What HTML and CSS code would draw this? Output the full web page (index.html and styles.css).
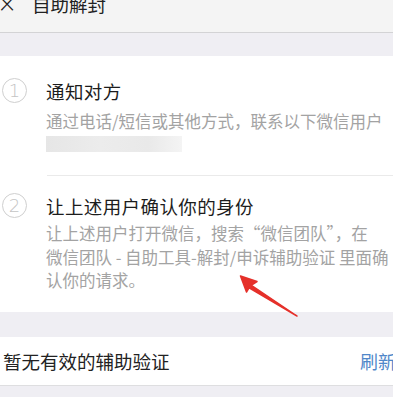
FILE: index.html
```html
<!DOCTYPE html>
<html lang="zh-CN">
<head>
<meta charset="utf-8">
<link rel="stylesheet" href="styles.css">
</head>
<body>
<div class="page">
  <header class="topbar">
    <span class="close">×</span>
    <span class="title">自助解封</span>
  </header>
  <div class="gap-top"></div>
  <section class="card">
    <div class="step">
      <div class="num">1</div>
      <div class="body">
        <div class="step-title">通知对方</div>
        <div class="step-desc">通过电话/短信或其他方式，联系以下微信用户</div>
        <div class="blur"></div>
      </div>
    </div>
    <div class="divider"></div>
    <div class="step step2">
      <div class="num">2</div>
      <div class="body">
        <div class="step-title">让上述用户确认你的身份</div>
        <div class="step-desc multi">让上述用户打开微信，搜索“微信团队”，在<br>微信团队 - 自助工具-解封/申诉辅助验证 里面确认你的请求。</div>
      </div>
    </div>
  </section>
  <div class="gap-mid"></div>
  <section class="row">
    <span class="row-text">暂无有效的辅助验证</span>
    <span class="refresh">刷新</span>
  </section>
  <div class="gap-bottom"></div>
  <svg class="arrow" width="393" height="397" viewBox="0 0 393 397">
    <path d="M297 316 L251 285 L249.5 288 Z M240.5 276 L257 281.5 L250 286 L246.5 292 Z" fill="#e5302a" stroke="#e5302a" stroke-width="1.5" stroke-linejoin="round"/>
  </svg>
</div>
</body>
</html>
```
FILE: styles.css
```css
html, body {
  margin: 0;
  padding: 0;
}
body {
  width: 393px;
  height: 397px;
  overflow: hidden;
  background: #efeef3;
  font-family: "Noto Sans CJK SC", "Noto Sans", sans-serif;
}
.page {
  position: relative;
  width: 393px;
}
.topbar {
  background: #f4f4f4;
  border-bottom: 1px solid #d3d3d5;
  display: flex;
  align-items: flex-start;
  overflow: hidden;
  box-sizing: border-box;
  height: 33px;
}
.close {
  font-size: 24px;
  line-height: 24px;
  margin-top: -8px;
  margin-left: -3px;
  color: #222;
  font-family: "DejaVu Sans", sans-serif;
  font-weight: 300;
}
.title {
  font-size: 18.5px;
  line-height: 22px;
  margin-top: -7px;
  margin-left: 15px;
  color: #222;
}
.gap-top {
  height: 23px;
}
.card {
  background: #fff;
  padding: 23px 0 19px;
}
.step {
  display: flex;
  align-items: flex-start;
}
.num {
  width: 23px;
  height: 23px;
  border: 1.5px solid #cfcfcf;
  border-radius: 50%;
  margin-left: 2px;
  margin-top: -1px;
  flex: none;
  display: flex;
  align-items: center;
  justify-content: center;
  color: #c4c4c4;
  font-family: "DejaVu Sans", sans-serif;
  font-weight: 200;
  font-size: 18px;
  line-height: 1;
}
.body {
  margin-left: 19px;
  flex: 1;
  min-width: 0;
}
.step-title {
  font-size: 18.5px;
  line-height: 24px;
  color: #1c1c1c;
  letter-spacing: 0.4px;
}
.step-desc {
  margin-top: 6px;
  font-size: 16.5px;
  line-height: 24px;
  color: #a3a3a3;
}
.step-desc.multi {
  margin-top: 4px;
  line-height: 23.5px;
}
.blur {
  margin-top: 3px;
  width: 136px;
  height: 16px;
  background: linear-gradient(90deg, #e6e6e6 0%, #ececec 40%, #e9e9e9 75%, #f4f4f4 100%);
}
.divider {
  margin: 23px 0 0 47px;
  height: 1px;
  background: #eaeaea;
}
.step2 {
  padding-top: 18px;
}
.gap-mid {
  height: 25px;
}
.row {
  background: #fff;
  height: 49px;
  border-bottom: 1px solid #dedee0;
  box-sizing: border-box;
  display: flex;
  align-items: center;
  justify-content: space-between;
  padding-left: 3px;
  margin-right: -3px;
}
.row-text {
  font-size: 18.5px;
  color: #222;
}
.refresh {
  font-size: 18px;
  color: #4f87c9;
}
.gap-bottom {
  height: 10px;
}
.arrow {
  position: absolute;
  left: 0;
  top: 0;
  pointer-events: none;
}
```
